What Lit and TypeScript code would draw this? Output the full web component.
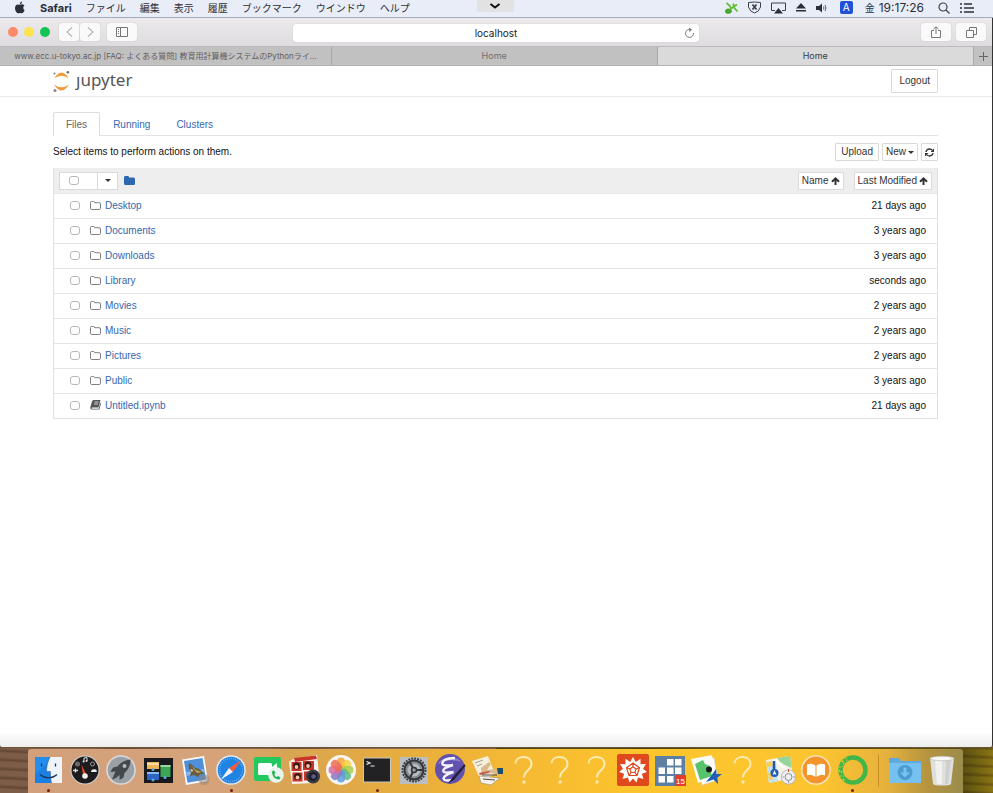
import { LitElement, html, css, svg, nothing } from "lit";
import { customElement, property } from "lit/decorators.js";

const petals = ["#f7a33c", "#f4d13d", "#a9cf4a", "#5dbb8a", "#5a9fdc", "#8c78c4", "#d46fa8", "#ef6a52"];

const question = svg`<path d="M7.500 9.500C7.500 5.500 11 3 15.500 3C20.500 3 23.500 6 23.500 10C23.500 16 16 16.500 16 23.500" fill="none" stroke="#fdeab0" stroke-width="2"/><circle cx="16" cy="28" r="1.700" fill="#fdeab0"/>`;

const art: Record<string, unknown> = {
  Finder: svg`<rect x="3" y="3" width="27" height="26" fill="#eef3fa"/><path d="M3 3H18C15.500 8 14.500 13 14.500 17.500H18.500C18.300 22 18.800 26 19.500 29H3Z" fill="#1b80e6"/><path d="M3 3H18C17 5 16.300 7 15.800 9L3 20Z" fill="#2d9bf2" opacity=".5"/><path d="M18 3C15.500 8 14.500 13 14.500 17.500H18.500C18.300 22 18.800 26 19.500 29" fill="none" stroke="#17385e" stroke-width=".4"/><path d="M8 20.500C13 25 20 25 25 20.500" fill="none" stroke="#17385e" stroke-width="1.200"/><path d="M9.500 9.500V12.500M23.500 9.500V12.500" stroke="#17385e" stroke-width="1.300"/>`,
  Dashboard: svg`<circle cx="16" cy="16" r="14.500" fill="#d5d2ce"/><circle cx="16" cy="16" r="13.500" fill="#1c1b1e"/><path d="M14 21L12.500 10.500L17.500 21Z" fill="#f04a2a"/><circle cx="16" cy="22" r="2.800" fill="#f6f2ee"/><circle cx="8.500" cy="10" r="2.500" fill="#6a6a6c"/><circle cx="23.500" cy="10" r="2" fill="none" stroke="#999"/><path d="M15 7.500V4L18 3.500V7" fill="none" stroke="#ddd"/><circle cx="14.500" cy="7.500" r="1" fill="#ddd"/><circle cx="17.500" cy="7" r="1" fill="#ddd"/><path d="M4 16.500H9M6.500 14.500V18.500" stroke="#ddd" stroke-width="1.300"/><path d="M22 18C22 16 24 14.500 25 15.500C27 14.500 28.500 17 27.500 18Z" fill="#eee"/>`,
  Launchpad: svg`<circle cx="16" cy="16" r="14.800" fill="#d9dbdd"/><circle cx="16" cy="16" r="13.300" fill="#9aa1a6"/><path d="M25.500 5.500C20 6 15.500 8.500 12.500 12.500L8 13.500L5.500 18L10.500 17.500L8.500 22L7 25.500L11 24L14.500 21L14.500 26L18.500 23.500L19.500 19C23.500 15.500 25.500 11 25.500 5.500Z" fill="#43484d"/><circle cx="19.500" cy="12" r="2" fill="#b5bbc0"/>`,
  "Mission Control": svg`<rect x="2" y="4" width="29" height="25" fill="#18191c"/><rect x="5" y="8" width="12" height="7" fill="#efb455"/><rect x="5" y="9" width="12" height="2" fill="#f9d9a1"/><rect x="18.500" y="11" width="10" height="12" fill="#3aa655"/><rect x="18.500" y="11" width="10" height="2" fill="#9ad6a0"/><rect x="5" y="18" width="12" height="8" fill="#2e64c2"/><rect x="5" y="18" width="12" height="2" fill="#8fb6ef"/><circle cx="11" cy="15.500" r="1.500" fill="#5aa7ee"/><circle cx="23" cy="23.500" r="1.500" fill="#5aa7ee"/><circle cx="11" cy="26" r="1.500" fill="#5aa7ee"/>`,
  Mail: svg`<path d="M3 5.500L25 2L29 27L7 31Z" fill="#f7f8fa"/><path d="M5 7L23.500 4L27 25.500L8.500 28.800Z" fill="#4f8fd9"/><path d="M7 18L25 15L25.500 18L8 22Z" fill="#86b7ea"/><path d="M10 9C13 10 14 12 16 14C19 14 23 16 25 20L21 20L19 23L15 21L11 22L12 18C10 16 9 12 10 9Z" fill="#6d5c3c"/><path d="M12 12L17 16L23 18L18 19Z" fill="#b9a35d"/><path d="M11 15L14 16L13 18Z" fill="#f0ead8"/><circle cx="25" cy="25.500" r="5.500" fill="#8c7a6c" opacity=".4"/><circle cx="25" cy="25.500" r="3.500" fill="none" stroke="#8a8d92" opacity=".7"/>`,
  Safari: svg`<circle cx="16" cy="16" r="14.800" fill="#e5e8ec"/><circle cx="16" cy="16" r="13.300" fill="#1f83e4"/><circle cx="16" cy="16" r="11.500" fill="none" stroke="#9ccbf7" stroke-width="1.500" stroke-dasharray="0.500 1.500"/><path d="M26 6.500L14 14L18 18Z" fill="#f15a3a"/><path d="M6 25.500L14 14L18 18Z" fill="#f3f5f8"/>`,
  FaceTime: svg`<rect x="2" y="3" width="27" height="24" rx="2" fill="#23c95e"/><rect x="6" y="9" width="14" height="12" rx="1.500" fill="#fff"/><path d="M20 13L25 9V20L20 17Z" fill="#fff"/><circle cx="24" cy="21" r="7.800" fill="#e9f5ec"/><path d="M20 17.500C20 22.500 23 25.500 27.500 25.500L28.500 23.500L26 22L24.500 23C23.300 22.300 22.500 21.300 22.300 20L23.500 19L22 16.300Z" fill="#23b457"/>`,
  "Photo Booth": svg`<path d="M5 5L29 1L31 20L26 29L4 30L1 8Z" fill="#f6f2ee"/><path d="M6 4L28 1.500L29 5L7 8Z" fill="#c9342b"/><g fill="#c9342b"><rect x="3.500" y="8" width="10" height="9"/><rect x="15" y="7" width="11" height="9"/><rect x="4.500" y="18.500" width="10" height="9"/><rect x="16" y="17.500" width="10" height="9"/></g><g fill="#3b1714"><circle cx="8.500" cy="12" r="3.400"/><circle cx="20" cy="11" r="3.400"/><circle cx="9.500" cy="22.500" r="3.400"/></g><g fill="#f1c6a5"><circle cx="8.500" cy="13" r="1.900"/><circle cx="20" cy="12" r="1.900"/><circle cx="9.500" cy="23.500" r="1.900"/></g><circle cx="25" cy="22.500" r="7" fill="#3a3a42"/><circle cx="25" cy="22.500" r="4.500" fill="#1d1d2a"/><circle cx="25.500" cy="22.500" r="2.300" fill="#5c5a88"/>`,
  Photos: svg`<circle cx="16" cy="16" r="15" fill="#f8f6f4"/>${petals.map((c, i) => svg`<rect x="12" y="3.500" width="8" height="12.500" rx="4" fill=${c} opacity=".85" transform=${`rotate(${i * 45} 16 16)`}/>`)}`,
  Terminal: svg`<rect x="2" y="3.500" width="28" height="25" fill="#c9c7c2"/><rect x="3" y="4.500" width="26" height="23" fill="#222225"/><path d="M5.500 7.500L9 9L5.500 10.500M9.500 12H13.500" fill="none" stroke="#eee" stroke-width="1.200"/>`,
  "System Preferences": svg`<rect x="2" y="3" width="28" height="27" fill="#b8bec4"/><circle cx="16" cy="16" r="11.500" fill="none" stroke="#3f4347" stroke-width="2" stroke-dasharray="2 1"/><circle cx="16" cy="16" r="9.500" fill="#83898e" stroke="#33373b" stroke-width="2"/><circle cx="16" cy="16" r="6.500" fill="#b5bbc0"/><path d="M16 16L25.500 16M16 16L11.500 7.500M16 16L11.500 24.500" stroke="#33373b" stroke-width="2"/><circle cx="16" cy="16" r="2.500" fill="#989ea3" stroke="#33373b" stroke-width="1.500"/>`,
  Emacs: svg`<circle cx="16" cy="15" r="15" fill="#6152ad"/><path d="M4 10C7 3 22 0 27 8C22 6 12 5 4 10Z" fill="#8e82d0"/><path d="M21 4C12 4 7.500 7 8.500 10C9.500 12.500 15 11.500 19 11C12 13 8.500 15 9.500 17.500C10.500 19.500 15 18.500 19.500 18C12 20.500 8.500 23 10 25.500C11.500 27 16 26.500 18.500 25.500" fill="none" stroke="#f5f2fc" stroke-width="2.400"/><path d="M30.500 10L18 24L14 29.500L20 26L31.500 12Z" fill="#231f38"/>`,
  TextWriter: svg`<path d="M1 7L17 2L24 20L10 27Z" fill="#f5efdc"/><path d="M4 9L12 6M6 12L11 10" stroke="#a6a290" stroke-width="1"/><path d="M8 22L29 24L20 31L10 29Z" fill="#f4f2ea" stroke="#8f8a78" stroke-width=".6"/><path d="M10 14L18 8L20 10L16 16L26 15L30 17L29 21L20 19L11 21Z" fill="#d9b98d"/><path d="M26 14H32V20L27 20Z" fill="#1d4f6d"/><path d="M8 19L18 17L19 18L9 21Z" fill="#c4504a"/><path d="M11 21L26 21M12 25L24 26" stroke="#39352c" stroke-width=".9"/>`,
  Mathematica: svg`<rect x="0" y="0" width="32" height="32" rx="2" fill="#e0491d"/><path d="M16 3L18.800 8L23.500 4.700L23.500 10.300L29 10L26 14.800L30 18L24.800 19.800L26.500 25L21 23.500L19.500 28.500L16 24.500L12.500 28.500L11 23.500L5.500 25L7.200 19.800L2 18L6 14.800L3 10L8.500 10.300L8.500 4.700L13.200 8Z" fill="#fff"/><path d="M16 9L22.500 13.700L20 21.500H12L9.500 13.700ZM16 9V13M22.500 13.700L19 15M20 21.500L18 18.500M12 21.500L14 18.500M9.500 13.700L13 15M16 12.800L19 15L18 18.500H14L13 15Z" fill="none" stroke="#e0491d" stroke-width="1.200"/>`,
  Excel: svg`<rect x="1" y="2" width="30" height="30" fill="#5d7fa3"/><g fill="#fff"><rect x="13" y="5" width="6.500" height="6.500"/><rect x="21" y="5" width="6.500" height="6.500"/><rect x="4.500" y="13.500" width="6.500" height="6.500"/><rect x="13" y="13.500" width="6.500" height="6.500"/><rect x="21" y="13.500" width="6.500" height="6.500"/><rect x="4.500" y="22" width="6.500" height="6.500"/><rect x="13" y="22" width="6.500" height="6.500"/></g><rect x="21" y="21" width="11" height="11" fill="#e3402c"/><text x="26.500" y="30" text-anchor="middle" font-family="Liberation Sans" font-size="8" fill="#fff">15</text>`,
  Grapher: svg`<path d="M6 5L24 4L28 26L12 31Z" fill="#fff" stroke="#ccc" stroke-width=".5"/><path d="M1 5L22 1L25 22L8 29Z" fill="#fbfbf7"/><path d="M5 10L13 6L15 10L20 12L22 22L10 26Z" fill="#57c46d"/><circle cx="19" cy="15.500" r="3" fill="#17181a"/><path d="M26 15L26.500 20L32 20L27.500 23.500L28 30L23.500 25.500L16 28L21 22Z" fill="#1f5fb4"/>`,
  Maps: svg`<path d="M2 6L26 2L29 24L5 29Z" fill="#f3f1e8"/><path d="M13 4L26 2L27.500 14C23 12 17 10 13 4Z" fill="#95d59b"/><path d="M3 12L12 10L14 27L5 29Z" fill="#bfe2f6"/><path d="M2.500 8L8 7L9 12L3.300 13ZM4 19L8 18L9 25L5 26Z" fill="#f6cf55"/><path d="M12 5C15 12 21 15 28 17" fill="none" stroke="#fff" stroke-width="2"/><path d="M10 7V18" stroke="#2456a8" stroke-width="2.500"/><circle cx="10.500" cy="19" r="4" fill="#1f5cb8"/><path d="M10.500 16L12.500 21L10.500 20L8.500 21Z" fill="#fff"/><circle cx="24.500" cy="23" r="7.200" fill="#eef0f2" stroke="#aab" stroke-width=".8"/><circle cx="24.500" cy="23" r="3.500" fill="none" stroke="#89909a" stroke-width="1"/><path d="M24.500 27V29M18.500 23H20M29 23H31" stroke="#99a" /><path d="M24.500 15V18" stroke="#d0553c"/>`,
  iBooks: svg`<circle cx="16" cy="16" r="14.800" fill="#fbe9cf"/><circle cx="16" cy="16" r="13.500" fill="#f5942a"/><path d="M15.500 11.500C12.500 9.500 9.500 9.500 7 10.500V21.500C10 20.500 13 21 15.500 23ZM16.500 11.500C19.500 9.500 22.500 9.500 25 10.500V21.500C22 20.500 19 21 16.500 23Z" fill="#fff"/>`,
  Anaconda: svg`<circle cx="16" cy="16" r="12.500" fill="none" stroke="#43b649" stroke-width="4.500"/><circle cx="16" cy="16" r="13.500" fill="none" stroke="#fbc62f" stroke-width="1.500" stroke-dasharray="2 3 1 4 2 2 1 5 2 3 1 100" transform="rotate(130 16 16)"/><circle cx="16" cy="16" r="11.500" fill="none" stroke="#fbc62f" stroke-width="1" stroke-dasharray="1 3 2 4 1 2 2 3 1 100" transform="rotate(145 16 16)"/>`,
  Downloads: svg`<path d="M0 4H10L12 7H32V29H0Z" fill="#5fa9dc"/><rect x="0" y="9" width="32" height="20" fill="#76c1ef"/><circle cx="16" cy="18.500" r="7.500" fill="#4c9bd0"/><path d="M14.500 13.500H17.500V18.500H21L16 23.500L11 18.500H14.500Z" fill="#76c1ef"/>`,
  Trash: svg`<path d="M4 4H28L25 30C24 32 8 32 7 30Z" fill="#dfe0de"/><path d="M9 6L11 30H16V6Z" fill="#f1f1f0"/><path d="M20 6L19 30H22L25 6Z" fill="#cfd0ce"/><ellipse cx="16" cy="4.500" rx="12" ry="2.200" fill="#f7f7f6" stroke="#bdbdb8" stroke-width=".7"/>`,
};

interface DockApp { name: string; running?: boolean; }
const apps: DockApp[] = [
  { name: "Finder", running: true }, { name: "Dashboard" }, { name: "Launchpad" }, { name: "Mission Control" },
  { name: "Mail" }, { name: "Safari", running: true }, { name: "FaceTime" }, { name: "Photo Booth" },
  { name: "Photos" }, { name: "Terminal", running: true }, { name: "System Preferences" }, { name: "Emacs" },
  { name: "TextWriter" }, { name: "Missing" }, { name: "Missing" }, { name: "Missing" }, { name: "Mathematica" },
  { name: "Excel" }, { name: "Grapher" }, { name: "Missing" }, { name: "Maps" }, { name: "iBooks" },
  { name: "Anaconda", running: true },
];
const stacks: DockApp[] = [{ name: "Downloads" }, { name: "Trash" }];

const buttonReset = css`
  * { box-sizing: border-box; }
  button { font: inherit; color: inherit; margin: 0; padding: 0; border: 0; background: none; }
  svg { display: block; flex: none; }
`;

@customElement("mac-menu-bar")
class MacMenuBar extends LitElement {
  static styles = [buttonReset, css`
    :host { display: block; }
    .bar { position: relative; display: flex; align-items: center; height: 18px; padding: 0 18px 2px 14px; background: #e8edf8; border-bottom: 1px solid #a3abba; color: #2b2f3a; font: 10px/14px Inter, "Noto Sans CJK JP", sans-serif; }
    .menus { display: flex; align-items: center; gap: 14px; }
    .app { font-size: 11px; font-weight: 700; }
    .status { display: flex; align-items: center; gap: 10px; margin-left: auto; }
    .clock { font-size: 12px; display: flex; gap: 4px; align-items: center; margin: 0 4px 0 2px; }
    .day { font-size: 10px; }
    .source { width: 13px; height: 13px; margin-left: 2px; border-radius: 2px; background: #2351d6; color: #fff; text-align: center; line-height: 13px; }
    .notch { position: absolute; left: 50%; top: 0; width: 37px; height: 12px; margin-left: -20px; display: grid; place-items: center; background: #e2e2e2; }
  `];
  render() {
    return html`<header class="bar">
      <nav class="menus">
        <button aria-label="Apple"><svg width="12" height="13" viewBox="0 0 12 13" fill="#2b2f3a"><path d="M8.200.500C8.200 2 7 3.200 5.800 3.200C5.700 1.800 7 .700 8.200.500ZM9.300 6.800C9.300 5.400 10.400 4.700 10.500 4.600C9.500 3.300 8.200 3.300 7.700 3.300C6.900 3.400 6.400 3.800 5.900 3.800C5.400 3.800 4.800 3.300 4 3.400C2.200 3.500 1 5 1 7.100C1 9.700 2.700 12.300 4 12.300C4.700 12.300 5.100 11.900 5.900 11.900C6.700 11.900 7 12.300 7.700 12.300C9 12.300 10.200 10.300 10.600 9.300C9.800 8.900 9.300 8 9.300 6.800Z"/></svg></button>
        <button class="app">Safari</button>
        ${["ファイル", "編集", "表示", "履歴", "ブックマーク", "ウインドウ", "ヘルプ"].map((m) => html`<button>${m}</button>`)}
      </nav>
      <div class="status">
        <svg width="13" height="12" viewBox="0 0 13 12"><path d="M0 9.500C0 7 3 5.500 5.500 7C7.500 8.500 7 11 5 11.500C3 12 0 12 0 9.500Z" fill="#45a82e"/><path d="M1.500 1L5 4L6 7M5.500 7L9 4.500M9 4.500L12 2.500M8.500 5L12.500 9.500M8.500 5L8.500 1.500" stroke="#5fbd33" stroke-width="1.700" fill="none"/></svg>
        <svg width="13" height="13" viewBox="0 0 13 13" fill="none" stroke="#3c414c"><path d="M.500 1.500Q6.500.500 12.500 1.500V6Q11 11 6.500 12Q2 11 .500 6Z"/><path d="M4.500 3.500L8.500 8.500M8.500 3.500L4.500 8.500" stroke-width="1.800"/></svg>
        <svg width="15" height="12" viewBox="0 0 15 12"><path d="M4 8.500H.500V1H14.500V8.500H11" fill="none" stroke="#3c414c"/><path d="M7.500 6L12 11.500H3Z" fill="#2b2f3a"/></svg>
        <svg width="10" height="9" viewBox="0 0 10 9" fill="#2b2f3a"><path d="M5 0L10 5.500H0ZM0 7H10V8.500H0Z"/></svg>
        <svg width="12" height="10" viewBox="0 0 12 10"><path d="M0 3H3L6 .500V9.500L3 7H0Z" fill="#2b2f3a"/><path d="M7.500 3.500Q8.500 5 7.500 6.500M9 2Q11 5 9 8" fill="none" stroke="#5c616b"/></svg>
        <span class="source">A</span>
        <span class="clock"><span class="day">金</span><span>19:17:26</span></span>
        <svg width="12" height="12" viewBox="0 0 12 12" fill="none" stroke="#3c414c" stroke-width="1.200"><circle cx="5" cy="5" r="4"/><path d="M8 8L11.500 11.500"/></svg>
        <svg width="15" height="10" viewBox="0 0 15 10" stroke="#2b2f3a" stroke-width="1.400"><path d="M0 1H2M4 1H12M0 5H2M4 5H14M0 9H2M4 9H14"/></svg>
      </div>
      <button class="notch" aria-label="Expand"><svg width="12" height="8" viewBox="0 0 12 8"><path d="M1.500 2L6 5.500L10.500 2" fill="none" stroke="#111" stroke-width="2"/></svg></button>
    </header>`;
  }
}

@customElement("browser-chrome")
class BrowserChrome extends LitElement {
  static styles = [buttonReset, css`
    :host { display: block; font: 10px/14px Inter, "Noto Sans CJK JP", sans-serif; color: #333; }
    .toolbar { position: relative; display: flex; align-items: center; height: 29px; padding: 0 6px 0 8px; background: linear-gradient(#eceaec, #dedcde); border-bottom: 1px solid #bcbabc; }
    .lights { display: flex; gap: 6px; margin-right: 9px; }
    .light { width: 10px; height: 10px; border-radius: 50%; background: #fc8a68; }
    .light.min { background: #fbe352; }
    .light.max { background: #12c453; }
    .tool { display: grid; place-items: center; height: 18px; width: 30px; background: #fbfafb; border-radius: 3px; box-shadow: 0 0 1px #aaa; }
    .pair { display: flex; gap: 1px; margin-right: 7px; }
    .pair .tool { width: 20px; }
    .address { position: absolute; left: 293px; right: 293px; top: 6px; height: 18px; }
    .address input { width: 100%; height: 18px; border: 0; border-radius: 3px; background: #fff; box-shadow: 0 0 1px #aaa; font: inherit; color: #222; text-align: center; padding: 0; }
    .reload { position: absolute; right: 4px; top: 3px; }
    .end { display: flex; gap: 5px; margin-left: auto; }
    .tabs { display: flex; height: 19px; background: #c2c1c2; border-bottom: 1px solid #b3b2b3; font-size: 9px; color: #706f70; }
    .tab { flex: 326 1 0; min-width: 0; padding: 0 14px; text-align: center; border-right: 1px solid #a9a8a9; white-space: nowrap; overflow: hidden; }
    .tab.long { flex-grow: 333; font-size: 8px; color: #5f5e5f; }
    .tab.active { flex-grow: 316; background: #dbdadb; color: #3c3b3c; }
    .add { width: 18px; display: grid; place-items: center; }
  `];
  render() {
    return html`<div class="toolbar">
        <div class="lights"><button class="light" aria-label="Close"></button><button class="light min" aria-label="Minimise"></button><button class="light max" aria-label="Zoom"></button></div>
        <div class="pair">
          <button class="tool" aria-label="Back"><svg width="7" height="10" viewBox="0 0 7 10" fill="none" stroke="#b7b5b7" stroke-width="1.200"><path d="M6 .500L1 5L6 9.500"/></svg></button>
          <button class="tool" aria-label="Forward"><svg width="7" height="10" viewBox="0 0 7 10" fill="none" stroke="#b7b5b7" stroke-width="1.200"><path d="M1 .500L6 5L1 9.500"/></svg></button>
        </div>
        <button class="tool" aria-label="Sidebar"><svg width="12" height="10" viewBox="0 0 12 10" fill="none" stroke="#777"><path d="M.500.500H11.500V9.500H.500ZM4.500.500V9.500M2 2.500H3M2 4.500H3M2 6.500H3"/></svg></button>
        <div class="address">
          <input aria-label="Address" value="localhost" />
          <button class="reload" aria-label="Reload"><svg width="11" height="12" viewBox="0 0 11 12" fill="none" stroke="#777"><path d="M9.500 6A4 4 0 1 1 6.500 2.500"/><path d="M5 .500L8 2.700L5.500 5" fill="#777" stroke="none"/></svg></button>
        </div>
        <div class="end">
          <button class="tool" aria-label="Share"><svg width="10" height="12" viewBox="0 0 10 12" fill="none" stroke="#777"><path d="M3 4.500H.500V11.500H9.500V4.500H7M5 8V1M2.500 3L5 .800L7.500 3"/></svg></button>
          <button class="tool" aria-label="Tabs"><svg width="11" height="11" viewBox="0 0 11 11" fill="none" stroke="#777"><path d="M3.500 3V.500H10.500V7.500H8M.500 3.500H7.500V10.500H.500Z"/></svg></button>
        </div>
      </div>
      <div class="tabs">
        <button class="tab long">www.ecc.u-tokyo.ac.jp [FAQ: よくある質問] 教育用計算機システムのPythonライ…</button>
        <button class="tab">Home</button>
        <button class="tab active">Home</button>
        <button class="add" aria-label="New tab"><svg width="9" height="9" viewBox="0 0 9 9" stroke="#666"><path d="M4.500 0V9M0 4.500H9"/></svg></button>
      </div>`;
  }
}

const files: [string, string][] = [
  ["Desktop", "21 days ago"], ["Documents", "3 years ago"], ["Downloads", "3 years ago"], ["Library", "seconds ago"],
  ["Movies", "2 years ago"], ["Music", "2 years ago"], ["Pictures", "2 years ago"], ["Public", "3 years ago"],
  ["Untitled.ipynb", "21 days ago"],
];
const folder = html`<svg width="11" height="9" viewBox="0 0 11 9"><path d="M1.500.500H3.500Q4.500.500 4.500 1.700H9Q10.500 1.700 10.500 3V7.200Q10.500 8.500 9.300 8.500H1.700Q.500 8.500.500 7.200V1.700Q.500.500 1.500.500Z" fill="none" stroke="#808080"/></svg>`;
const book = html`<svg width="11" height="10" viewBox="0 0 11 10"><path d="M3.500 0H10.500L8.500 7.500H2Q1 8.500 2.300 8.700H8.700L10.200 3L11 3.500L9.400 9.500H2Q0 9.500.300 7.200L2 1.500Q2.400 0 3.500 0Z" fill="#555"/><path d="M4.500 2H8.500M4 4H8" stroke="#ddd" stroke-width=".9"/></svg>`;
const arrowUp = html`<svg width="9" height="8" viewBox="0 0 9 8" fill="none" stroke="#333" stroke-width="2"><path d="M4.500 8V1.500M1 4.800L4.500 1.400L8 4.800"/></svg>`;
const caret = html`<svg width="6" height="3" viewBox="0 0 6 3"><path d="M0 0H6L3 3Z" fill="#333"/></svg>`;

@customElement("jupyter-page")
class JupyterPage extends LitElement {
  static styles = [buttonReset, css`
    :host { display: block; flex: 1; font: 10px/14px "Liberation Sans", Arial, sans-serif; color: #111; background: linear-gradient(transparent calc(100% - 16px), #ededee) #fff; }
    a { color: #3568ae; text-decoration: none; }
    .head { display: flex; align-items: center; justify-content: space-between; height: 31px; padding: 0 54px 0 53px; border-bottom: 1px solid #eaeaea; }
    .logo { display: flex; align-items: center; gap: 6px; color: #565656; font: 17px/20px "Noto Sans", sans-serif; }
    .word { padding-bottom: 3px; }
    .btn { display: flex; align-items: center; justify-content: center; gap: 2px; height: 18px; padding: 0 5px; background: #fff; border: 1px solid #dadada; border-radius: 1px; color: #333; }
    .btn.tight { padding: 0 3px; }
    .btn.logout { height: 24px; padding: 0 7px; }
    .main { padding: 15px 54px 0 53px; }
    .tabs { display: flex; height: 24px; border-bottom: 1px solid #e2e2e2; }
    .tabs a { height: 24px; padding: 5px 12px; border: 1px solid transparent; }
    .tabs a.active { color: #666; background: #fff; border-color: #ddd #ddd #fff; border-radius: 2px 2px 0 0; }
    .actions { display: flex; align-items: center; justify-content: space-between; height: 32px; }
    .group { display: flex; gap: 3px; }
    .list { width: 100%; border-collapse: separate; border-spacing: 0; border: 1px solid #e0e0e0; border-top: 0; }
    th { background: #eee; height: 25px; padding: 0; font-weight: 400; text-align: left; }
    td { height: 25px; padding: 0; border-top: 1px solid #e4e4e4; }
    .row { display: flex; align-items: center; }
    td .row { padding-left: 16px; gap: 4px; }
    td svg, td input { margin-bottom: 2px; }
    .age { text-align: right; padding-right: 11px; white-space: nowrap; }
    input[type="checkbox"] { appearance: none; flex: none; width: 10px; height: 9px; margin: 0; border: 1px solid #b8b8b8; border-radius: 3px; background: #fff; }
    td input[type="checkbox"] { margin: 0 6px 2px 0; }
    .select { width: 39px; height: 18px; padding: 0 9px; background: #fff; border: 1px solid #dadada; }
    .row .drop { width: 20px; border-left: 0; margin-right: 6px; }
    th .row { padding-left: 5px; }
    th .select.row { padding-left: 9px; }
    .sorts { display: flex; justify-content: flex-end; gap: 10px; padding-right: 5px; }
  `];
  render() {
    return html`<header class="head">
        <a class="logo" href="#" aria-label="jupyter">
          <svg width="17" height="21" viewBox="0 0 17 21"><path d="M1 7.500Q8.500-4.500 16 7.500Q8.500 1.800 1 7.500ZM1 13.500Q8.500 25.500 16 13.500Q8.500 19.200 1 13.500Z" fill="#f39a3a"/><circle cx="1.500" cy="2.500" r="1" fill="#777"/><circle cx="14.800" cy="1.200" r="1.200" fill="#666"/><circle cx="2" cy="19.500" r="1.500" fill="#888"/></svg>
          <span class="word">ȷupyter</span>
        </a>
        <button class="btn logout">Logout</button>
      </header>
      <main class="main">
        <nav class="tabs"><a class="active" href="#files">Files</a><a href="#running">Running</a><a href="#clusters">Clusters</a></nav>
        <div class="actions">
          <span>Select items to perform actions on them.</span>
          <div class="group">
            <button class="btn">Upload</button>
            <button class="btn tight">New ${caret}</button>
            <button class="btn tight" aria-label="Refresh"><svg width="9" height="9" viewBox="0 0 9 9" fill="none" stroke="#333" stroke-width="1.300"><path d="M1 4Q1.500 1 4.500 1Q6.500 1 7.500 2.500M8 5Q7.500 8 4.500 8Q2.500 8 1.500 6.500"/><path d="M9 .500V4H5.500ZM0 8.500V5H3.500Z" fill="#333" stroke="none"/></svg></button>
          </div>
        </div>
        <table class="list">
          <thead><tr>
            <th><div class="row"><label class="select row"><input type="checkbox" aria-label="Select all" /></label><button class="btn drop" aria-label="Select by type">${caret}</button>
              <a href="#" aria-label="Home folder"><svg width="11" height="9" viewBox="0 0 11 9"><path d="M1 0H4Q5 0 5 1.500H9.500Q11 1.500 11 3V7.500Q11 9 9.500 9H1.500Q0 9 0 7.500V1.500Q0 0 1 0Z" fill="#2c68b0"/></svg></a></div></th>
            <th><div class="sorts"><button class="btn tight">Name ${arrowUp}</button><button class="btn tight">Last Modified ${arrowUp}</button></div></th>
          </tr></thead>
          <tbody>${files.map(([name, age]) => html`<tr>
            <td><div class="row"><input type="checkbox" aria-label=${name} />${name.endsWith(".ipynb") ? book : folder}<a href="#${name}">${name}</a></div></td>
            <td class="age">${age}</td></tr>`)}</tbody>
        </table>
      </main>`;
  }
}

@customElement("mac-dock")
class MacDock extends LitElement {
  @property({ attribute: false }) apps: DockApp[] = [];
  @property({ attribute: false }) stacks: DockApp[] = [];
  static styles = [buttonReset, css`
    :host { display: block; padding: 1px 30px 0 28px; border-top: 1px solid #6b5538; background: repeating-linear-gradient(3deg, transparent 0 4px, rgba(40, 20, 5, .3) 6px, transparent 9px), linear-gradient(90deg, #7d5d48 0, #8e6b54 50%, #54480f 50%, #5e5210 calc(100% - 28px), #8b7614); }
    .dock { display: flex; height: 44px; padding: 0 3px 0 2px; border-radius: 3px 3px 0 0; background: linear-gradient(90deg, #d2a07c 0, #d6a379 21%, #d9a552 28%, #e7ad3d 40%, #f5b934 52%, #fdc52c 66%, #fcc42f 85%, #e5b13e 92%, #b7953f 96%, #9a8c4d 100%); }
    .item { flex: 1 1 0; min-width: 0; display: flex; flex-direction: column; align-items: center; padding-top: 5px; }
    .dot { width: 3px; height: 3px; margin-top: 3px; border-radius: 50%; background: #6d1f0c; }
    .rule { flex: 0 0 16px; display: flex; justify-content: center; padding: 6px 0; }
    .rule::before { content: ""; width: 1px; background: #c98d22; }
  `];
  private item(a: DockApp) {
    return html`<button class="item" aria-label=${a.name}><svg width="32" height="32" viewBox="0 0 32 32">${art[a.name] ?? question}</svg>${a.running ? html`<span class="dot"></span>` : nothing}</button>`;
  }
  render() {
    return html`<div class="dock">${this.apps.map((a) => this.item(a))}<span class="rule"></span>${this.stacks.map((a) => this.item(a))}</div>`;
  }
}

@customElement("app-root")
class AppRoot extends LitElement {
  static styles = css`
    :host { display: flex; flex-direction: column; min-height: 100vh; background: #7a5a40; }
    .window { flex: 1; display: flex; flex-direction: column; border-right: 1px solid #333; border-radius: 0 0 3px 3px; overflow: hidden; }
  `;
  render() {
    return html`<mac-menu-bar></mac-menu-bar>
      <div class="window"><browser-chrome></browser-chrome><jupyter-page></jupyter-page></div>
      <mac-dock .apps=${apps} .stacks=${stacks}></mac-dock>`;
  }
}
